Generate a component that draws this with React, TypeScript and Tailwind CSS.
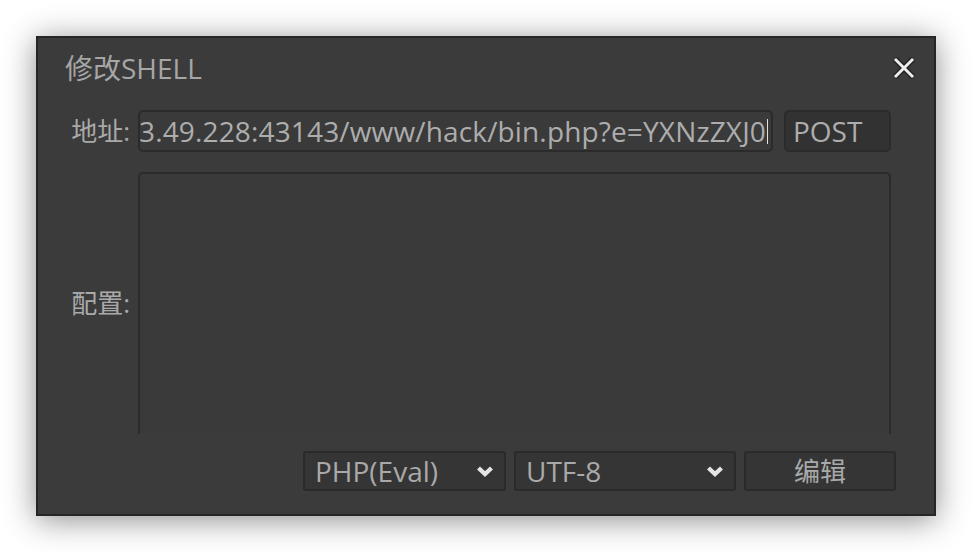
import React from 'react'

// ─── Edit-shell dialog (dark Swing-like look) ───────────────────────────────

function Chevron() {
  return (
    <svg width="18" height="12" viewBox="0 0 18 12" className="shrink-0">
      <polyline points="2.5,3 9,9 15.5,3" fill="none" stroke="#e4e4e4" strokeWidth="4.4" />
    </svg>
  )
}

function Select({ label, width }: { label: string; width: string }) {
  return (
    <div
      className={`${width} h-full flex items-center justify-between pl-[10px] pr-[10px] rounded-[3px] border-2 border-[#2a2a2a] bg-[#353535] text-[#a9a9a9]`}
    >
      <span>{label}</span>
      <Chevron />
    </div>
  )
}

export default function App() {
  return (
    <div className="w-[972px] h-[552px] bg-white pl-[36px] pt-[36px] font-['Open_Sans','Noto_Sans_CJK_SC',sans-serif] text-[28px] leading-none">
      <div className="w-[900px] h-[480px] border-2 border-[#262626] bg-[#3b3b3b] shadow-[0_4px_30px_rgba(0,0,0,0.45)] flex flex-col">
        {/* title bar */}
        <div className="h-[60px] flex items-center justify-between pl-[27px] pr-[19px]">
          <span className="text-[#a6a6a6]">修改SHELL</span>
          <svg width="22" height="22" viewBox="0 0 22 22">
            <g stroke="#1e1e1e" strokeWidth="5.5">
              <line x1="2" y1="2" x2="20" y2="20" />
              <line x1="20" y1="2" x2="2" y2="20" />
            </g>
            <g stroke="#ececec" strokeWidth="3">
              <line x1="2" y1="2" x2="20" y2="20" />
              <line x1="20" y1="2" x2="2" y2="20" />
            </g>
          </svg>
        </div>

        {/* address row */}
        <div className="mt-[12px] h-[42px] flex items-center">
          <div className="w-[92px] text-right text-[26px] text-[#a9a9a9]">地址:</div>
          <div className="ml-[8px] w-[635px] h-full flex items-center justify-end overflow-hidden rounded-[5px] border-2 border-[#2b2b2b] bg-[#3a3a3a] pr-[3px]">
            <span className="shrink-0 whitespace-nowrap tracking-[0.15px] text-[#adadad]">
              3.49.228:43143/www/hack/bin.php?e=YXNzZXJ0
            </span>
            <span className="shrink-0 ml-[1px] w-px h-[25px] bg-[#e0e0e0]" />
          </div>
          <div className="ml-[11px] w-[107px] h-full flex items-center rounded-[5px] border-2 border-[#2b2b2b] bg-[#323232] pl-[7px] text-[#adadad]">
            POST
          </div>
        </div>

        {/* config row */}
        <div className="mt-[20px] h-[262px] flex">
          <div className="w-[92px] flex items-center justify-end text-[26px] text-[#a9a9a9]">配置:</div>
          <div className="ml-[8px] w-[753px] h-full rounded-t-[5px] border-2 border-b-0 border-[#2b2b2b] bg-[#3a3a3a]" />
        </div>

        {/* bottom controls */}
        <div className="mt-[17px] h-[40px] flex justify-end gap-[8px] pr-[38px]">
          <Select label="PHP(Eval)" width="w-[203px]" />
          <Select label="UTF-8" width="w-[222px]" />
          <div className="w-[152px] h-full flex items-center justify-center rounded-[3px] border-2 border-[#2a2a2a] bg-[#353535] text-[#a9a9a9] text-[26px]">
            编辑
          </div>
        </div>
      </div>
    </div>
  )
}
